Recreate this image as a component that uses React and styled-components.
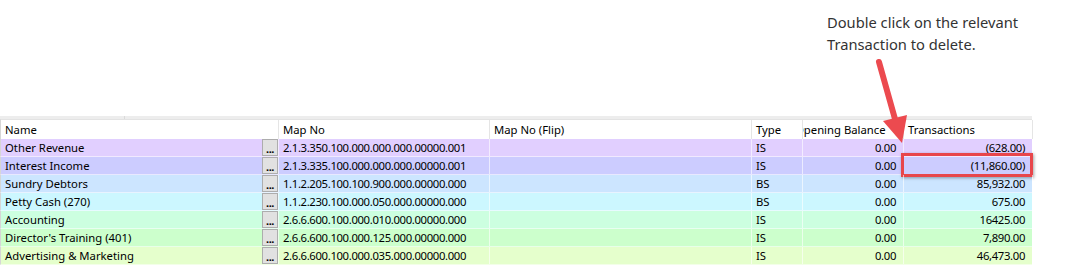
import React from 'react';
import styled, { createGlobalStyle } from 'styled-components';

const GlobalStyle = createGlobalStyle`
  html, body {
    margin: 0;
    padding: 0;
    background: #ffffff;
  }
  body {
    font-family: "Noto Sans", "Open Sans", Arial, sans-serif;
  }
`;

const COLUMNS = '278px 211px 262px 51px 101px 129px';

const ROWS = [
  { name: 'Other Revenue', map: '2.1.3.350.100.000.000.000.00000.001', type: 'IS', opening: '0.00', tx: '(628.00)', bg: '#e1cfff' },
  { name: 'Interest Income', map: '2.1.3.335.100.000.000.000.00000.001', type: 'IS', opening: '0.00', tx: '(11,860.00)', bg: '#ccccff', marked: true },
  { name: 'Sundry Debtors', map: '1.1.2.205.100.100.900.000.00000.000', type: 'BS', opening: '0.00', tx: '85,932.00', bg: '#cce5ff' },
  { name: 'Petty Cash (270)', map: '1.1.2.230.100.000.050.000.00000.000', type: 'BS', opening: '0.00', tx: '675.00', bg: '#ccf7ff' },
  { name: 'Accounting', map: '2.6.6.600.100.000.010.000.00000.000', type: 'IS', opening: '0.00', tx: '16425.00', bg: '#ccffe0' },
  { name: "Director's Training (401)", map: '2.6.6.600.100.000.125.000.00000.000', type: 'IS', opening: '0.00', tx: '7,890.00', bg: '#ccffcc' },
  { name: 'Advertising & Marketing', map: '2.6.6.600.100.000.035.000.00000.000', type: 'IS', opening: '0.00', tx: '46,473.00', bg: '#e5ffcc' },
];

const App = () => {
  return (
    <>
      <GlobalStyle />
      <Page>
        {/* Callout text above the grid */}
        <NoteArea>
          <Note>
            Double click on the relevant
            <br />
            Transaction to delete.
          </Note>
        </NoteArea>

        {/* Grid */}
        <Grid>
          <TopStrip>
            <StripPart $width={124} />
            <StripPart />
          </TopStrip>

          <HeaderRow>
            <HeaderCell>Name</HeaderCell>
            <HeaderCell>Map No</HeaderCell>
            <HeaderCell>Map No (Flip)</HeaderCell>
            <HeaderCell>Type</HeaderCell>
            <HeaderCell $shift={-12}>Opening Balance</HeaderCell>
            <HeaderCell>Transactions</HeaderCell>
          </HeaderRow>

          {ROWS.map((row) => (
            <Row key={row.name} $bg={row.bg}>
              <NameCell>
                <span>{row.name}</span>
                <EllipsisButton>...</EllipsisButton>
              </NameCell>
              <Cell $numeric>{row.map}</Cell>
              <Cell />
              <Cell>{row.type}</Cell>
              <Cell $right $numeric>{row.opening}</Cell>
              <Cell $right $numeric $marked={row.marked}>{row.tx}</Cell>
            </Row>
          ))}
        </Grid>

        {/* Red pointer arrow */}
        <Arrow width="1088" height="266" viewBox="0 0 1088 266" aria-hidden="true">
          <line x1="879" y1="62" x2="895" y2="119" stroke="#ec4a4f" strokeWidth="6" strokeLinecap="round" />
          <polygon points="883,121 907,115 902,143" fill="#ec4a4f" />
        </Arrow>
      </Page>
    </>
  );
};

const Page = styled.div`
  position: relative;
  width: 1088px;
  height: 266px;
  overflow: hidden;
  background: #ffffff;
`;

const NoteArea = styled.div`
  height: 116px;
  padding: 11px 0 0 827px;
  box-sizing: border-box;
`;

const Note = styled.p`
  margin: 0;
  font-size: 14.7px;
  line-height: 22px;
  color: #333333;
`;

const Grid = styled.div`
  width: 1032px;
  display: flex;
  flex-direction: column;
  font-size: 11.3px;
  color: #000000;
`;

const TopStrip = styled.div`
  display: flex;
  height: 3px;
  background: #ededed;
`;

const StripPart = styled.div`
  ${(p) => (p.$width ? `width: ${p.$width}px;` : 'flex: 1;')}
  border-right: 1px solid #dadada;
  &:last-child {
    border-right: none;
  }
`;

const HeaderRow = styled.div`
  display: grid;
  grid-template-columns: ${COLUMNS};
  height: 20px;
  background: #ffffff;
  border-top: 1px solid #e3e3e3;
  border-left: 1px solid #d6d6d6;
  box-sizing: border-box;
`;

const HeaderCell = styled.div`
  display: flex;
  align-items: center;
  padding-left: 4px;
  border-right: 1px solid #e5e5e5;
  overflow: hidden;
  white-space: nowrap;
  line-height: 19px;

  &::before {
    content: '';
    flex: none;
    margin-left: ${(p) => p.$shift || 0}px;
  }
`;

const Row = styled.div`
  display: grid;
  grid-template-columns: ${COLUMNS};
  height: 18px;
  background: ${(p) => p.$bg};
  border-left: 1px solid #d6d6d6;
  border-bottom: 1px solid rgba(255, 255, 255, 0.55);
  box-sizing: border-box;
`;

const Cell = styled.div`
  position: relative;
  display: flex;
  align-items: center;
  justify-content: ${(p) => (p.$right ? 'flex-end' : 'flex-start')};
  padding: ${(p) => (p.$right ? '0 7px 0 0' : '0 0 0 4px')};
  border-right: 1px solid rgba(255, 255, 255, 0.6);
  white-space: nowrap;
  line-height: 17px;
  letter-spacing: ${(p) => (p.$numeric ? '-0.35px' : '0')};

  ${(p) =>
    p.$marked &&
    `
    &::after {
      content: '';
      position: absolute;
      left: -3px;
      right: -1px;
      top: -4px;
      bottom: -3px;
      border: 3px solid #e8464b;
      box-shadow: 1px 1px 3px rgba(0, 0, 0, 0.35);
    }
  `}
`;

const NameCell = styled(Cell)`
  justify-content: space-between;
  padding-right: 0;
`;

const EllipsisButton = styled.span`
  align-self: flex-end;
  width: 16px;
  height: 17px;
  box-sizing: border-box;
  background: #e1e1e1;
  border: 1px solid #adadad;
  font-size: 11px;
  font-weight: 700;
  line-height: 17px;
  text-align: center;
  letter-spacing: -0.5px;
  color: #000000;
`;

const Arrow = styled.svg`
  position: absolute;
  inset: 0;
  pointer-events: none;
`;

export default App;
